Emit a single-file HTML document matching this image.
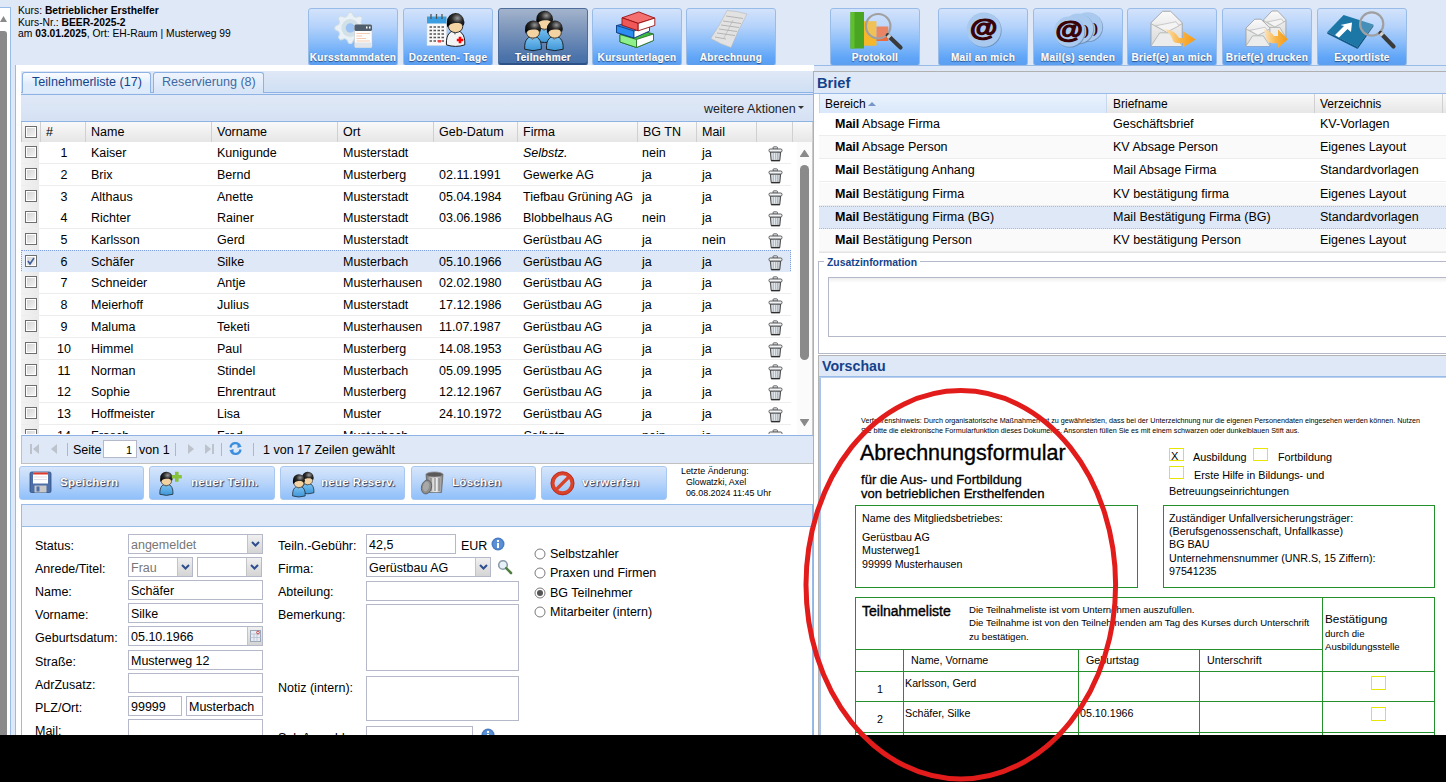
<!DOCTYPE html><html><head><meta charset="utf-8"><style>
*{box-sizing:border-box;margin:0;padding:0}
html,body{width:1446px;height:782px;overflow:hidden;background:#dfe8f6;font-family:"Liberation Sans",sans-serif;color:#000}
.a{position:absolute}
.t{position:absolute;white-space:nowrap;line-height:1}
.tb{position:absolute;border:1px solid #99bbe8;border-radius:3px;background:linear-gradient(#d3e3fb 0%,#b6d3fb 30%,#86bbf9 62%,#5ea4f7 88%,#5c9ff0 100%);overflow:hidden}
.tb.act{background:linear-gradient(#a3b3cc 0%,#7a94ba 40%,#4c74ab 85%,#4670aa 100%);border-color:#4d6d9c;box-shadow:inset 0 -2px 0 #2e5288}
.tb .lbl{position:absolute;left:0;right:0;bottom:1px;text-align:center;color:#fff;font-weight:bold;font-size:10px;line-height:12px;-webkit-text-stroke:0.2px #fff;text-shadow:0 1px 1px rgba(0,20,60,0.55),0 0 1px rgba(0,20,60,0.45);white-space:nowrap;letter-spacing:0.35px}

.gh{position:absolute;top:0;height:20px;font-size:12.5px;line-height:21px;padding-left:5px;border-right:1px solid #d0d0d0;white-space:nowrap}
.cell{position:absolute;font-size:12.5px;line-height:23px;white-space:nowrap}
.cb{position:absolute;width:12px;height:12px;border:1px solid #6e6e6e;background:linear-gradient(135deg,#d0d0d0,#f6f6f6);box-shadow:inset 0 0 0 1px #fff}
.inp{position:absolute;border:1px solid #b5b8c8;background:#fff;font-size:12.5px;line-height:18px;padding-left:2px;padding-top:1px;white-space:nowrap;overflow:hidden}
.trig{position:absolute;right:0;top:0;bottom:0;width:15px;background:linear-gradient(#f0f0f0,#d4d4d4);border-left:1px solid #c4c4c4}
.lab{position:absolute;font-size:12.5px;line-height:14px;white-space:nowrap}
.btn2{position:absolute;top:466px;height:34px;border:1px solid #a9c8f0;border-radius:3px;background:linear-gradient(#d7e6fb,#b7d4fa 50%,#8fc0fb 100%)}
.btn2 .l{position:absolute;top:8px;font-weight:bold;font-size:11.6px;letter-spacing:0.25px;color:#fff;text-shadow:1px 1px 1px rgba(0,0,30,0.7),0 0 1px rgba(0,0,40,0.6);white-space:nowrap}
</style></head><body><svg width="0" height="0" style="position:absolute"><defs>
<radialGradient id="hair" cx="0.6" cy="0.35" r="0.7"><stop offset="0" stop-color="#9a9a9a"/><stop offset="0.45" stop-color="#2a2a2a"/><stop offset="1" stop-color="#000"/></radialGradient>
<linearGradient id="bodyb" x1="0" y1="0" x2="0" y2="1"><stop offset="0" stop-color="#7cc4f4"/><stop offset="1" stop-color="#3e95d6"/></linearGradient>
<linearGradient id="env" x1="0" y1="0" x2="0" y2="1"><stop offset="0" stop-color="#fafafa"/><stop offset="1" stop-color="#d8d8d8"/></linearGradient>
<linearGradient id="arr" x1="0" y1="0" x2="1" y2="0"><stop offset="0" stop-color="#fde6c0"/><stop offset="0.5" stop-color="#f8b548"/><stop offset="1" stop-color="#f59a12"/></linearGradient>
<linearGradient id="can" x1="0" y1="0" x2="1" y2="0"><stop offset="0" stop-color="#6d6d6d"/><stop offset="0.35" stop-color="#cfcfcf"/><stop offset="0.6" stop-color="#f0f0f0"/><stop offset="1" stop-color="#7a7a7a"/></linearGradient>
<linearGradient id="trg" x1="0" y1="0" x2="1" y2="0"><stop offset="0" stop-color="#b9c3cd"/><stop offset="0.45" stop-color="#f4f6f8"/><stop offset="1" stop-color="#aab4be"/></linearGradient></defs></svg><div class="a" style="left:0;top:7px;width:11px;height:728px;background:#fff;border-top:1px solid #99bbe8;border-right:1px solid #99bbe8"></div><svg class="a" style="left:0;top:14px" width="8" height="10"><path d="M0 8 L3.5 2 L7 8 Z" fill="#8a8a8a"/></svg><div class="a" style="left:0;top:31px;width:7px;height:704px;background:#8a8a8a;border-radius:0 3px 0 0"></div><div class="a" style="left:11px;top:65px;width:4px;height:670px;background:#dfe8f6"></div><div class="t" style="left:18px;top:5.65px;font-size:10.3px;line-height:10.3px">Kurs: <b>Betrieblicher Ersthelfer</b></div><div class="t" style="left:18px;top:17.65px;font-size:10.3px;line-height:10.3px">Kurs-Nr.: <b>BEER-2025-2</b></div><div class="t" style="left:18px;top:28.65px;font-size:10.3px;line-height:10.3px">am <b>03.01.2025</b>, Ort: EH-Raum | Musterweg 99</div><div class="tb" style="left:308px;top:8px;width:90px;height:58px"><svg style="position:absolute;left:-1px;top:-1px" width="91" height="50" overflow="visible"><polygon points="40.78,4.57 43.82,4.57 45.81,8.43 48.00,9.34 52.13,8.02 54.28,10.17 52.96,14.30 53.87,16.49 57.73,18.48 57.73,21.52 53.87,23.51 52.96,25.70 54.28,29.83 52.13,31.98 48.00,30.66 45.81,31.57 43.82,35.43 40.78,35.43 38.79,31.57 36.60,30.66 32.47,31.98 30.32,29.83 31.64,25.70 30.73,23.51 26.87,21.52 26.87,18.48 30.73,16.49 31.64,14.30 30.32,10.17 32.47,8.02 36.60,9.34 38.79,8.43" fill="#e9f1f6" stroke="#cfdde6" stroke-width="1" stroke-linejoin="round"/><circle cx="42.3" cy="20" r="9" fill="#d2e0e8"/><circle cx="42.3" cy="20" r="4.7" fill="#9cc3f4"/><rect x="46.5" y="16.5" width="17.5" height="23" rx="1.5" fill="#fdfdfd" stroke="#c0c8d0" stroke-width="0.6"/><rect x="46.5" y="16.5" width="17.5" height="6.5" rx="1.5" fill="#4f5e6e"/><rect x="58" y="18.5" width="1.5" height="2" fill="#fff"/><rect x="61" y="18.5" width="1.5" height="2" fill="#fff"/><rect x="47" y="34.5" width="16.5" height="5" fill="#dfe5ea"/><path d="M48.5 25.5H62M48.5 28H54M48.5 30.5H58M48.5 33H62" stroke="#f2b890" stroke-width="0.7"/></svg><div class="lbl">Kursstammdaten</div></div><div class="tb" style="left:403px;top:8px;width:90px;height:58px"><svg style="position:absolute;left:-1px;top:-1px" width="91" height="50" overflow="visible"><rect x="24" y="8.5" width="19.5" height="29" fill="#f8f8f8" stroke="#d8d8d8" stroke-width="0.5"/><rect x="24" y="8.5" width="19.5" height="7" fill="#3b9ee0"/><path d="M28 6V11M33.5 6V11M39 6V11" stroke="#555" stroke-width="1.3"/><path d="M26.5 19H29M30.5 19H33M34.5 19H37M38.5 19H41" stroke="#555" stroke-width="1.4" stroke-dasharray="none"/><path d="M26.5 22.5H29M30.5 22.5H33M34.5 22.5H37M38.5 22.5H41" stroke="#555" stroke-width="1.4" stroke-dasharray="none"/><path d="M26.5 26H29M30.5 26H33M34.5 26H37M38.5 26H41" stroke="#555" stroke-width="1.4" stroke-dasharray="none"/><path d="M26.5 29.5H29M30.5 29.5H33M34.5 29.5H37M38.5 29.5H41" stroke="#555" stroke-width="1.4" stroke-dasharray="none"/><path d="M26.5 33H29M30.5 33H33M34.5 33H37M38.5 33H41" stroke="#555" stroke-width="1.4" stroke-dasharray="none"/><rect x="35" y="32" width="3" height="2.5" fill="#e84848"/><path d="M43.42 36.83 C42.77 25.01 48.47 22.64 52.60 22.64 C56.73 22.64 62.43 25.01 61.78 36.83 Q52.60 39.98 43.42 36.83Z" fill="#f4f4f4" stroke="#151515" stroke-width="0.97"/><path d="M50.01 22.96 L51.95 26.31 L54.11 22.96Z" fill="#fff" stroke="#333" stroke-width="0.54"/><ellipse cx="52.60" cy="18.64" rx="7.13" ry="5.94" fill="#f3d3a2" stroke="#1a1a1a" stroke-width="0.86"/><path d="M44.61 19.62 C45.58 16.70 48.28 15.62 50.44 15.30 C53.68 14.86 58.00 14.54 60.48 17.78 C61.78 15.08 61.46 12.92 61.24 13.46 A8.64 8.64 0 0 0 43.96 14.00 C43.64 16.16 43.96 18.32 44.61 19.62Z" fill="url(#hair)"/><path d="M53.8 32H60.2M57 28.8V35.2" stroke="#f00" stroke-width="2.6"/></svg><div class="lbl">Dozenten- Tage</div></div><div class="tb act" style="left:498px;top:8px;width:90px;height:58px"><svg style="position:absolute;left:-1px;top:-1px" width="91" height="50" overflow="visible"><path d="M37.84 32.97 C37.23 21.70 42.66 19.44 46.60 19.44 C50.54 19.44 55.97 21.70 55.36 32.97 Q46.60 35.98 37.84 32.97Z" fill="url(#bodyb)" stroke="#151515" stroke-width="0.93"/><path d="M44.13 19.75 L45.98 22.94 L48.04 19.75Z" fill="#fff" stroke="#333" stroke-width="0.52"/><ellipse cx="46.60" cy="15.63" rx="6.80" ry="5.67" fill="#f3d3a2" stroke="#1a1a1a" stroke-width="0.82"/><path d="M38.98 16.56 C39.91 13.77 42.48 12.74 44.54 12.44 C47.63 12.02 51.75 11.71 54.12 14.80 C55.36 12.23 55.05 10.17 54.84 10.68 A8.24 8.24 0 0 0 38.36 11.20 C38.05 13.26 38.36 15.32 38.98 16.56Z" fill="url(#hair)"/><path d="M26.67 41.22 C26.08 30.49 31.25 28.34 35.00 28.34 C38.75 28.34 43.92 30.49 43.33 41.22 Q35.00 44.08 26.67 41.22Z" fill="url(#bodyb)" stroke="#151515" stroke-width="0.88"/><path d="M32.65 28.63 L34.41 31.67 L36.37 28.63Z" fill="#fff" stroke="#333" stroke-width="0.49"/><ellipse cx="35.00" cy="24.71" rx="6.47" ry="5.39" fill="#f3d3a2" stroke="#1a1a1a" stroke-width="0.78"/><path d="M27.75 25.60 C28.63 22.95 31.08 21.97 33.04 21.68 C35.98 21.28 39.90 20.99 42.15 23.93 C43.33 21.48 43.04 19.52 42.84 20.01 A7.84 7.84 0 0 0 27.16 20.50 C26.87 22.46 27.16 24.42 27.75 25.60Z" fill="url(#hair)"/><path d="M48.47 41.22 C47.88 30.49 53.05 28.34 56.80 28.34 C60.55 28.34 65.72 30.49 65.13 41.22 Q56.80 44.08 48.47 41.22Z" fill="url(#bodyb)" stroke="#151515" stroke-width="0.88"/><path d="M54.45 28.63 L56.21 31.67 L58.17 28.63Z" fill="#fff" stroke="#333" stroke-width="0.49"/><ellipse cx="56.80" cy="24.71" rx="6.47" ry="5.39" fill="#f3d3a2" stroke="#1a1a1a" stroke-width="0.78"/><path d="M49.55 25.60 C50.43 22.95 52.88 21.97 54.84 21.68 C57.78 21.28 61.70 20.99 63.95 23.93 C65.13 21.48 64.84 19.52 64.64 20.01 A7.84 7.84 0 0 0 48.96 20.50 C48.67 22.46 48.96 24.42 49.55 25.60Z" fill="url(#hair)"/></svg><div class="lbl">Teilnehmer</div></div><div class="tb" style="left:592px;top:8px;width:90px;height:58px"><svg style="position:absolute;left:-1px;top:-1px" width="91" height="50" overflow="visible"><path d="M28 26.5 L47 22 L61.5 26 L61.5 32.5 L44.5 39.5 L28 34Z" fill="#3fb83f" stroke="#1d5e1d" stroke-width="0.8"/><path d="M28 26.5 L44.5 31.5 L44.5 39.5 L28 34Z" fill="#8ef08a" stroke="#1d6e1d" stroke-width="0.8"/><path d="M44.5 31.5 L61.5 26 L61.5 32.5 L44.5 39.5Z" fill="#fff" stroke="#1d6e1d" stroke-width="0.8"/><path d="M24.5 17.5 L43 13 L57.5 17 L57.5 23 L42 30 L24.5 24.5Z" fill="#2a7fe0" stroke="#113a7a" stroke-width="0.8"/><path d="M24.5 17.5 L42 23 L42 30 L24.5 24.5Z" fill="#2d8df0" stroke="#113a7a" stroke-width="0.8"/><path d="M42 23 L57.5 17 L57.5 23 L42 30Z" fill="#fff" stroke="#113a7a" stroke-width="0.8"/><path d="M30 9.8 L46.8 3.9 L62.8 10.1 L46.2 15.4Z" fill="#f47070" stroke="#9a1010" stroke-width="0.9"/><path d="M30 9.8 L46.2 15.4 L46.2 22.8 L30 17.2Z" fill="#f05858" stroke="#9a1010" stroke-width="0.9"/><path d="M46.2 15.4 L62.8 10.1 L62.8 17.4 L46.2 22.8Z" fill="#fff" stroke="#9a1010" stroke-width="0.9"/></svg><div class="lbl">Kursunterlagen</div></div><div class="tb" style="left:686px;top:8px;width:90px;height:58px"><svg style="position:absolute;left:-1px;top:-1px" width="91" height="50" overflow="visible"><path d="M41 2.5 Q51 3 61 6 Q52 22 45 39.5 Q34 36 24.8 30.5 Q34 17 41 2.5Z" fill="#e2e2e2" stroke="#b8b8b8" stroke-width="0.6"/><path d="M40 8 L57 10.5 M37 13 L55 15.5 M35 17 L53 19.5 M33 21 L51 23.5 M31 25 L49 27.5 M29 29 L40 31" stroke="#a8a8a8" stroke-width="0.8"/><path d="M47 12 L38 30" stroke="#b0b0b0" stroke-width="0.6"/></svg><div class="lbl">Abrechnung</div></div><div class="tb" style="left:830px;top:8px;width:90px;height:58px"><svg style="position:absolute;left:-1px;top:-1px" width="91" height="50" overflow="visible"><rect x="20.5" y="4" width="13.5" height="36.5" fill="#4aa523"/><rect x="20.5" y="4" width="4" height="36.5" fill="#5fbf2e"/><rect x="34" y="13.2" width="12.5" height="24.5" fill="#f6b72a"/><rect x="46.5" y="18.5" width="11.8" height="14.5" fill="#ee6a3a"/><circle cx="48.2" cy="18.2" r="12.2" fill="#dceafc" fill-opacity="0.22" stroke="#a0a0a0" stroke-width="2.2"/><path d="M57.7 27.3 L70.5 39.5" stroke="#3a3a3a" stroke-width="4.2" stroke-linecap="round"/><path d="M57.7 27.3 L59.9 29.4" stroke="#cfcfcf" stroke-width="4.2"/></svg><div class="lbl">Protokoll</div></div><div class="tb" style="left:938px;top:8px;width:90px;height:58px"><svg style="position:absolute;left:-1px;top:-1px" width="91" height="50" overflow="visible"><circle cx="46.5" cy="22.400000000000002" r="17.2" fill="#5d7a9e" opacity="0.6"/><circle cx="45.7" cy="21.6" r="17.2" fill="#a9caee"/><g transform="translate(45.7,20.6) scale(1.12,0.92)"><text x="0" y="8" text-anchor="middle" font-family="Liberation Sans" font-weight="bold" font-size="25" fill="#3a0306" stroke="#3a0306" stroke-width="1.3">@</text></g></svg><div class="lbl">Mail an mich</div></div><div class="tb" style="left:1033px;top:8px;width:90px;height:58px"><svg style="position:absolute;left:-1px;top:-1px" width="91" height="50" overflow="visible"><circle cx="55.599999999999994" cy="19.6" r="14.5" fill="#5d7a9e" opacity="0.6"/><circle cx="54.8" cy="18.8" r="14.5" fill="#a9caee"/><text x="60" y="25" font-family="Liberation Serif" font-weight="bold" font-size="15" fill="#3a0306">)</text><circle cx="46.0" cy="21.3" r="15" fill="#5d7a9e" opacity="0.6"/><circle cx="45.2" cy="20.5" r="15" fill="#a9caee"/><text x="51" y="27" font-family="Liberation Serif" font-weight="bold" font-size="15" fill="#3a0306">)</text><circle cx="37.0" cy="24.400000000000002" r="15.2" fill="#5d7a9e" opacity="0.6"/><circle cx="36.2" cy="23.6" r="15.2" fill="#a9caee"/><g transform="translate(36.2,22.6) scale(1.12,0.92)"><text x="0" y="8" text-anchor="middle" font-family="Liberation Sans" font-weight="bold" font-size="25" fill="#3a0306" stroke="#3a0306" stroke-width="1.3">@</text></g></svg><div class="lbl">Mail(s) senden</div></div><div class="tb" style="left:1127px;top:8px;width:90px;height:58px"><svg style="position:absolute;left:-1px;top:-1px" width="91" height="50" overflow="visible"><path d="M24 14.751000000000001 L35.544 3.3 L43.656 3.3 L55.2 14.751000000000001 L55.2 38.0 L24 38.0Z" fill="url(#env)" stroke="#9a9a9a" stroke-width="0.8"/><path d="M24 15.751000000000001 L39.6 24.12 L55.2 15.751000000000001" fill="#e6e6e6" stroke="#a8b0a8" stroke-width="0.8"/><path d="M28.68 17.874 L48.96 13.71 L52.08 17.874 L39.6 24.12Z" fill="#f4f4f4" stroke="#b0b0b0" stroke-width="0.6"/><path d="M24 38.0 L32.736000000000004 24.814000000000004 L46.464 24.814000000000004 L55.2 38.0" fill="#ececec" stroke="#a8b0a8" stroke-width="0.8"/><path d="M37 21 Q48 22 52 30 L56 30 L56 23.3 L68.7 31.5 L56 39.6 L56 35 Q48 36 46 33 Q45 27 37 21Z" fill="url(#arr)"/></svg><div class="lbl">Brief(e) an mich</div></div><div class="tb" style="left:1222px;top:8px;width:90px;height:58px"><svg style="position:absolute;left:-1px;top:-1px" width="91" height="50" overflow="visible"><path d="M41.7 11.745000000000001 L49.914 3 L55.686 3 L63.900000000000006 11.745000000000001 L63.900000000000006 29.5 L41.7 29.5Z" fill="url(#env)" stroke="#9a9a9a" stroke-width="0.8"/><path d="M41.7 12.745000000000001 L52.800000000000004 18.9 L63.900000000000006 12.745000000000001" fill="#e6e6e6" stroke="#a8b0a8" stroke-width="0.8"/><path d="M45.03 14.129999999999999 L59.46000000000001 10.95 L61.68000000000001 14.129999999999999 L52.800000000000004 18.9Z" fill="#f4f4f4" stroke="#b0b0b0" stroke-width="0.6"/><path d="M41.7 29.5 L47.916000000000004 19.43 L57.684 19.43 L63.900000000000006 29.5" fill="#ececec" stroke="#a8b0a8" stroke-width="0.8"/><path d="M24 20.044 L32.843 11.2 L39.057 11.2 L47.9 20.044 L47.9 38.0 L24 38.0Z" fill="url(#env)" stroke="#9a9a9a" stroke-width="0.8"/><path d="M24 21.044 L35.95 27.279999999999998 L47.9 21.044" fill="#e6e6e6" stroke="#a8b0a8" stroke-width="0.8"/><path d="M27.585 22.456 L43.120000000000005 19.24 L45.51 22.456 L35.95 27.279999999999998Z" fill="#f4f4f4" stroke="#b0b0b0" stroke-width="0.6"/><path d="M24 38.0 L30.692 27.816 L41.208 27.816 L47.9 38.0" fill="#ececec" stroke="#a8b0a8" stroke-width="0.8"/><path d="M42 21 Q50 24 52 28 L56 28 L56 21.6 L65.9 31.2 L56 39.9 L56 35 Q48 36 45 33 Q43 27 42 21Z" fill="url(#arr)"/></svg><div class="lbl">Brief(e) drucken</div></div><div class="tb" style="left:1317px;top:8px;width:90px;height:58px"><svg style="position:absolute;left:-1px;top:-1px" width="91" height="50" overflow="visible"><path d="M10.3 23.9 L26.6 7 L56.4 16.6 L40.6 39.1Z" fill="#1c77a6"/><path d="M10.3 23.9 L40.6 39.1 L40.6 41 L10.3 25.8Z" fill="#0f5a82"/><path d="M40.6 39.1 L56.4 16.6 L56.4 18.5 L40.6 41Z" fill="#0b4a6e"/><path d="M18 27 L27 18 L23.5 17 L35 14.5 L34 24 L30.5 21 L22 29.5Z" fill="#fff"/><circle cx="54.7" cy="16" r="11.6" fill="#dceafc" fill-opacity="0.22" stroke="#a0a0a0" stroke-width="2.2"/><path d="M63.5 25.0 L76.5 38.5" stroke="#3a3a3a" stroke-width="4.2" stroke-linecap="round"/><path d="M63.5 25.0 L65.6 27.2" stroke="#cfcfcf" stroke-width="4.2"/></svg><div class="lbl">Exportliste</div></div><div class="a" style="left:15px;top:65px;width:1431px;height:1px;background:#99bbe8"></div><div class="a" style="left:15px;top:65px;width:799px;height:670px;background:#fff;border-left:1px solid #99bbe8"></div><div class="a" style="left:21px;top:71px;width:792px;height:22px;background:linear-gradient(#dfe8f6,#cfdff4)"></div><div class="a" style="left:21px;top:92px;width:792px;height:1px;background:#8db2e3"></div><div class="a" style="left:21px;top:93px;width:792px;height:1px;background:#dbe7f8"></div><div class="a" style="left:21px;top:94px;width:792px;height:1px;background:#8db2e3"></div><div class="a" style="left:22px;top:72px;width:129px;height:21px;border:1px solid #8db2e3;border-bottom:none;border-radius:3px 3px 0 0;background:linear-gradient(#fafcff,#deebfb 60%,#deebfb)"></div><div class="t" style="left:32px;top:75px;font-size:12.6px;line-height:14px;color:#15428b">Teilnehmerliste (17)</div><div class="a" style="left:153px;top:72px;width:111px;height:21px;border:1px solid #8db2e3;border-bottom:none;border-radius:3px 3px 0 0;background:linear-gradient(#eef4fd,#d6e4f8)"></div><div class="t" style="left:162px;top:75px;font-size:12.6px;line-height:14px;color:#416aa3">Reservierung (8)</div><div class="a" style="left:21px;top:95px;width:792px;height:27px;background:linear-gradient(#dfe8f6,#d5e2f4)"></div><div class="a" style="left:21px;top:121px;width:792px;height:1px;background:#8db2e3"></div><div class="t" style="left:704px;top:102px;font-size:12.5px;line-height:14px;color:#222">weitere Aktionen</div><svg class="a" style="left:798px;top:106px" width="6" height="4"><path d="M0 0H6L3 3Z" fill="#333"/></svg><div class="a" style="left:21px;top:122px;width:792px;height:20px;background:linear-gradient(#f9f9f9,#e6e6e6);border-left:1px solid #c8c8c8"></div><div class="gh" style="top:122px;left:21px;width:20px"></div><div class="gh" style="top:122px;left:41px;width:45px">#</div><div class="gh" style="top:122px;left:86px;width:126px">Name</div><div class="gh" style="top:122px;left:212px;width:126px">Vorname</div><div class="gh" style="top:122px;left:338px;width:96px">Ort</div><div class="gh" style="top:122px;left:434px;width:84px">Geb-Datum</div><div class="gh" style="top:122px;left:518px;width:120px">Firma</div><div class="gh" style="top:122px;left:638px;width:59px">BG TN</div><div class="gh" style="top:122px;left:697px;width:60px">Mail</div><div class="gh" style="top:122px;left:757px;width:36px"></div><div class="gh" style="top:122px;left:793px;width:20px"></div><div class="cb" style="left:25px;top:126px"></div><div class="a" style="left:21px;top:142px;width:772px;height:292px;overflow:hidden"><div class="a" style="left:0;top:0px;width:770px;height:22px;background:#fff;border-bottom:1px solid #ededed"></div><div class="a" style="left:0;top:0px;width:18px;height:21px;background:linear-gradient(90deg,#f3f3f3,#e9e9e9)"></div><div class="cb" style="left:4px;top:4px"></div><div class="cell" style="left:23px;top:0px;width:40px;text-align:center">1</div><div class="cell" style="left:70px;top:0px;">Kaiser</div><div class="cell" style="left:196px;top:0px;">Kunigunde</div><div class="cell" style="left:322px;top:0px;">Musterstadt</div><div class="cell" style="left:418px;top:0px;"></div><div class="cell" style="left:502px;top:0px;font-style:italic;">Selbstz.</div><div class="cell" style="left:621px;top:0px;">nein</div><div class="cell" style="left:681px;top:0px;">ja</div><svg class="a" style="left:747px;top:4px" width="15" height="16" viewBox="0 0 15 16"><rect x="5" y="0.8" width="4.5" height="2.4" rx="1" fill="#e6eaee" stroke="#4a4a4a" stroke-width="0.8"/><path d="M2.3 6 L3.2 14.6 H11.8 L12.7 6Z" fill="url(#trg)" stroke="#3f3f3f" stroke-width="0.9"/><path d="M5.6 7V13.5M7.5 7V13.5M9.4 7V13.5" stroke="#a0acb8" stroke-width="0.8"/><rect x="1" y="3" width="13" height="3" rx="1.3" fill="#f2f4f6" stroke="#4a4a4a" stroke-width="0.9"/><path d="M3.2 14.6 H11.8" stroke="#2e2e2e" stroke-width="1.4"/></svg><div class="a" style="left:0;top:22px;width:770px;height:22px;background:#fff;border-bottom:1px solid #ededed"></div><div class="a" style="left:0;top:22px;width:18px;height:21px;background:linear-gradient(90deg,#f3f3f3,#e9e9e9)"></div><div class="cb" style="left:4px;top:26px"></div><div class="cell" style="left:23px;top:22px;width:40px;text-align:center">2</div><div class="cell" style="left:70px;top:22px;">Brix</div><div class="cell" style="left:196px;top:22px;">Bernd</div><div class="cell" style="left:322px;top:22px;">Musterberg</div><div class="cell" style="left:418px;top:22px;">02.11.1991</div><div class="cell" style="left:502px;top:22px;">Gewerke AG</div><div class="cell" style="left:621px;top:22px;">ja</div><div class="cell" style="left:681px;top:22px;">ja</div><svg class="a" style="left:747px;top:26px" width="15" height="16" viewBox="0 0 15 16"><rect x="5" y="0.8" width="4.5" height="2.4" rx="1" fill="#e6eaee" stroke="#4a4a4a" stroke-width="0.8"/><path d="M2.3 6 L3.2 14.6 H11.8 L12.7 6Z" fill="url(#trg)" stroke="#3f3f3f" stroke-width="0.9"/><path d="M5.6 7V13.5M7.5 7V13.5M9.4 7V13.5" stroke="#a0acb8" stroke-width="0.8"/><rect x="1" y="3" width="13" height="3" rx="1.3" fill="#f2f4f6" stroke="#4a4a4a" stroke-width="0.9"/><path d="M3.2 14.6 H11.8" stroke="#2e2e2e" stroke-width="1.4"/></svg><div class="a" style="left:0;top:44px;width:770px;height:22px;background:#fff;border-bottom:1px solid #ededed"></div><div class="a" style="left:0;top:44px;width:18px;height:21px;background:linear-gradient(90deg,#f3f3f3,#e9e9e9)"></div><div class="cb" style="left:4px;top:48px"></div><div class="cell" style="left:23px;top:44px;width:40px;text-align:center">3</div><div class="cell" style="left:70px;top:44px;">Althaus</div><div class="cell" style="left:196px;top:44px;">Anette</div><div class="cell" style="left:322px;top:44px;">Musterstadt</div><div class="cell" style="left:418px;top:44px;">05.04.1984</div><div class="cell" style="left:502px;top:44px;">Tiefbau Grüning AG</div><div class="cell" style="left:621px;top:44px;">ja</div><div class="cell" style="left:681px;top:44px;">ja</div><svg class="a" style="left:747px;top:48px" width="15" height="16" viewBox="0 0 15 16"><rect x="5" y="0.8" width="4.5" height="2.4" rx="1" fill="#e6eaee" stroke="#4a4a4a" stroke-width="0.8"/><path d="M2.3 6 L3.2 14.6 H11.8 L12.7 6Z" fill="url(#trg)" stroke="#3f3f3f" stroke-width="0.9"/><path d="M5.6 7V13.5M7.5 7V13.5M9.4 7V13.5" stroke="#a0acb8" stroke-width="0.8"/><rect x="1" y="3" width="13" height="3" rx="1.3" fill="#f2f4f6" stroke="#4a4a4a" stroke-width="0.9"/><path d="M3.2 14.6 H11.8" stroke="#2e2e2e" stroke-width="1.4"/></svg><div class="a" style="left:0;top:65px;width:770px;height:22px;background:#fff;border-bottom:1px solid #ededed"></div><div class="a" style="left:0;top:65px;width:18px;height:21px;background:linear-gradient(90deg,#f3f3f3,#e9e9e9)"></div><div class="cb" style="left:4px;top:69px"></div><div class="cell" style="left:23px;top:65px;width:40px;text-align:center">4</div><div class="cell" style="left:70px;top:65px;">Richter</div><div class="cell" style="left:196px;top:65px;">Rainer</div><div class="cell" style="left:322px;top:65px;">Musterstadt</div><div class="cell" style="left:418px;top:65px;">03.06.1986</div><div class="cell" style="left:502px;top:65px;">Blobbelhaus AG</div><div class="cell" style="left:621px;top:65px;">nein</div><div class="cell" style="left:681px;top:65px;">ja</div><svg class="a" style="left:747px;top:69px" width="15" height="16" viewBox="0 0 15 16"><rect x="5" y="0.8" width="4.5" height="2.4" rx="1" fill="#e6eaee" stroke="#4a4a4a" stroke-width="0.8"/><path d="M2.3 6 L3.2 14.6 H11.8 L12.7 6Z" fill="url(#trg)" stroke="#3f3f3f" stroke-width="0.9"/><path d="M5.6 7V13.5M7.5 7V13.5M9.4 7V13.5" stroke="#a0acb8" stroke-width="0.8"/><rect x="1" y="3" width="13" height="3" rx="1.3" fill="#f2f4f6" stroke="#4a4a4a" stroke-width="0.9"/><path d="M3.2 14.6 H11.8" stroke="#2e2e2e" stroke-width="1.4"/></svg><div class="a" style="left:0;top:87px;width:770px;height:22px;background:#fff;border-bottom:1px solid #ededed"></div><div class="a" style="left:0;top:87px;width:18px;height:21px;background:linear-gradient(90deg,#f3f3f3,#e9e9e9)"></div><div class="cb" style="left:4px;top:91px"></div><div class="cell" style="left:23px;top:87px;width:40px;text-align:center">5</div><div class="cell" style="left:70px;top:87px;">Karlsson</div><div class="cell" style="left:196px;top:87px;">Gerd</div><div class="cell" style="left:322px;top:87px;">Musterstadt</div><div class="cell" style="left:418px;top:87px;"></div><div class="cell" style="left:502px;top:87px;">Gerüstbau AG</div><div class="cell" style="left:621px;top:87px;">ja</div><div class="cell" style="left:681px;top:87px;">nein</div><svg class="a" style="left:747px;top:91px" width="15" height="16" viewBox="0 0 15 16"><rect x="5" y="0.8" width="4.5" height="2.4" rx="1" fill="#e6eaee" stroke="#4a4a4a" stroke-width="0.8"/><path d="M2.3 6 L3.2 14.6 H11.8 L12.7 6Z" fill="url(#trg)" stroke="#3f3f3f" stroke-width="0.9"/><path d="M5.6 7V13.5M7.5 7V13.5M9.4 7V13.5" stroke="#a0acb8" stroke-width="0.8"/><rect x="1" y="3" width="13" height="3" rx="1.3" fill="#f2f4f6" stroke="#4a4a4a" stroke-width="0.9"/><path d="M3.2 14.6 H11.8" stroke="#2e2e2e" stroke-width="1.4"/></svg><div class="a" style="left:0;top:108px;width:770px;height:23px;background:#dfe8f6;border:1px dotted #7f9fe0"></div><div class="a" style="left:1px;top:109px;width:18px;height:21px;background:linear-gradient(90deg,#e8f0fb,#d6e5f8)"></div><div class="cb" style="left:4px;top:113px"></div><svg class="a" style="left:5px;top:114px" width="10" height="10"><path d="M2 5 L4 8 L8 2" stroke="#3d5f9e" stroke-width="1.6" fill="none"/></svg><div class="cell" style="left:23px;top:109px;width:40px;text-align:center">6</div><div class="cell" style="left:70px;top:109px;">Schäfer</div><div class="cell" style="left:196px;top:109px;">Silke</div><div class="cell" style="left:322px;top:109px;">Musterbach</div><div class="cell" style="left:418px;top:109px;">05.10.1966</div><div class="cell" style="left:502px;top:109px;">Gerüstbau AG</div><div class="cell" style="left:621px;top:109px;">ja</div><div class="cell" style="left:681px;top:109px;">ja</div><svg class="a" style="left:747px;top:113px" width="15" height="16" viewBox="0 0 15 16"><rect x="5" y="0.8" width="4.5" height="2.4" rx="1" fill="#e6eaee" stroke="#4a4a4a" stroke-width="0.8"/><path d="M2.3 6 L3.2 14.6 H11.8 L12.7 6Z" fill="url(#trg)" stroke="#3f3f3f" stroke-width="0.9"/><path d="M5.6 7V13.5M7.5 7V13.5M9.4 7V13.5" stroke="#a0acb8" stroke-width="0.8"/><rect x="1" y="3" width="13" height="3" rx="1.3" fill="#f2f4f6" stroke="#4a4a4a" stroke-width="0.9"/><path d="M3.2 14.6 H11.8" stroke="#2e2e2e" stroke-width="1.4"/></svg><div class="a" style="left:0;top:130px;width:770px;height:22px;background:#fff;border-bottom:1px solid #ededed"></div><div class="a" style="left:0;top:130px;width:18px;height:21px;background:linear-gradient(90deg,#f3f3f3,#e9e9e9)"></div><div class="cb" style="left:4px;top:134px"></div><div class="cell" style="left:23px;top:130px;width:40px;text-align:center">7</div><div class="cell" style="left:70px;top:130px;">Schneider</div><div class="cell" style="left:196px;top:130px;">Antje</div><div class="cell" style="left:322px;top:130px;">Musterhausen</div><div class="cell" style="left:418px;top:130px;">02.02.1980</div><div class="cell" style="left:502px;top:130px;">Gerüstbau AG</div><div class="cell" style="left:621px;top:130px;">ja</div><div class="cell" style="left:681px;top:130px;">ja</div><svg class="a" style="left:747px;top:134px" width="15" height="16" viewBox="0 0 15 16"><rect x="5" y="0.8" width="4.5" height="2.4" rx="1" fill="#e6eaee" stroke="#4a4a4a" stroke-width="0.8"/><path d="M2.3 6 L3.2 14.6 H11.8 L12.7 6Z" fill="url(#trg)" stroke="#3f3f3f" stroke-width="0.9"/><path d="M5.6 7V13.5M7.5 7V13.5M9.4 7V13.5" stroke="#a0acb8" stroke-width="0.8"/><rect x="1" y="3" width="13" height="3" rx="1.3" fill="#f2f4f6" stroke="#4a4a4a" stroke-width="0.9"/><path d="M3.2 14.6 H11.8" stroke="#2e2e2e" stroke-width="1.4"/></svg><div class="a" style="left:0;top:152px;width:770px;height:22px;background:#fff;border-bottom:1px solid #ededed"></div><div class="a" style="left:0;top:152px;width:18px;height:21px;background:linear-gradient(90deg,#f3f3f3,#e9e9e9)"></div><div class="cb" style="left:4px;top:156px"></div><div class="cell" style="left:23px;top:152px;width:40px;text-align:center">8</div><div class="cell" style="left:70px;top:152px;">Meierhoff</div><div class="cell" style="left:196px;top:152px;">Julius</div><div class="cell" style="left:322px;top:152px;">Musterstadt</div><div class="cell" style="left:418px;top:152px;">17.12.1986</div><div class="cell" style="left:502px;top:152px;">Gerüstbau AG</div><div class="cell" style="left:621px;top:152px;">ja</div><div class="cell" style="left:681px;top:152px;">ja</div><svg class="a" style="left:747px;top:156px" width="15" height="16" viewBox="0 0 15 16"><rect x="5" y="0.8" width="4.5" height="2.4" rx="1" fill="#e6eaee" stroke="#4a4a4a" stroke-width="0.8"/><path d="M2.3 6 L3.2 14.6 H11.8 L12.7 6Z" fill="url(#trg)" stroke="#3f3f3f" stroke-width="0.9"/><path d="M5.6 7V13.5M7.5 7V13.5M9.4 7V13.5" stroke="#a0acb8" stroke-width="0.8"/><rect x="1" y="3" width="13" height="3" rx="1.3" fill="#f2f4f6" stroke="#4a4a4a" stroke-width="0.9"/><path d="M3.2 14.6 H11.8" stroke="#2e2e2e" stroke-width="1.4"/></svg><div class="a" style="left:0;top:174px;width:770px;height:22px;background:#fff;border-bottom:1px solid #ededed"></div><div class="a" style="left:0;top:174px;width:18px;height:21px;background:linear-gradient(90deg,#f3f3f3,#e9e9e9)"></div><div class="cb" style="left:4px;top:178px"></div><div class="cell" style="left:23px;top:174px;width:40px;text-align:center">9</div><div class="cell" style="left:70px;top:174px;">Maluma</div><div class="cell" style="left:196px;top:174px;">Teketi</div><div class="cell" style="left:322px;top:174px;">Musterhausen</div><div class="cell" style="left:418px;top:174px;">11.07.1987</div><div class="cell" style="left:502px;top:174px;">Gerüstbau AG</div><div class="cell" style="left:621px;top:174px;">ja</div><div class="cell" style="left:681px;top:174px;">ja</div><svg class="a" style="left:747px;top:178px" width="15" height="16" viewBox="0 0 15 16"><rect x="5" y="0.8" width="4.5" height="2.4" rx="1" fill="#e6eaee" stroke="#4a4a4a" stroke-width="0.8"/><path d="M2.3 6 L3.2 14.6 H11.8 L12.7 6Z" fill="url(#trg)" stroke="#3f3f3f" stroke-width="0.9"/><path d="M5.6 7V13.5M7.5 7V13.5M9.4 7V13.5" stroke="#a0acb8" stroke-width="0.8"/><rect x="1" y="3" width="13" height="3" rx="1.3" fill="#f2f4f6" stroke="#4a4a4a" stroke-width="0.9"/><path d="M3.2 14.6 H11.8" stroke="#2e2e2e" stroke-width="1.4"/></svg><div class="a" style="left:0;top:196px;width:770px;height:22px;background:#fff;border-bottom:1px solid #ededed"></div><div class="a" style="left:0;top:196px;width:18px;height:21px;background:linear-gradient(90deg,#f3f3f3,#e9e9e9)"></div><div class="cb" style="left:4px;top:200px"></div><div class="cell" style="left:23px;top:196px;width:40px;text-align:center">10</div><div class="cell" style="left:70px;top:196px;">Himmel</div><div class="cell" style="left:196px;top:196px;">Paul</div><div class="cell" style="left:322px;top:196px;">Musterberg</div><div class="cell" style="left:418px;top:196px;">14.08.1953</div><div class="cell" style="left:502px;top:196px;">Gerüstbau AG</div><div class="cell" style="left:621px;top:196px;">ja</div><div class="cell" style="left:681px;top:196px;">ja</div><svg class="a" style="left:747px;top:200px" width="15" height="16" viewBox="0 0 15 16"><rect x="5" y="0.8" width="4.5" height="2.4" rx="1" fill="#e6eaee" stroke="#4a4a4a" stroke-width="0.8"/><path d="M2.3 6 L3.2 14.6 H11.8 L12.7 6Z" fill="url(#trg)" stroke="#3f3f3f" stroke-width="0.9"/><path d="M5.6 7V13.5M7.5 7V13.5M9.4 7V13.5" stroke="#a0acb8" stroke-width="0.8"/><rect x="1" y="3" width="13" height="3" rx="1.3" fill="#f2f4f6" stroke="#4a4a4a" stroke-width="0.9"/><path d="M3.2 14.6 H11.8" stroke="#2e2e2e" stroke-width="1.4"/></svg><div class="a" style="left:0;top:218px;width:770px;height:22px;background:#fff;border-bottom:1px solid #ededed"></div><div class="a" style="left:0;top:218px;width:18px;height:21px;background:linear-gradient(90deg,#f3f3f3,#e9e9e9)"></div><div class="cb" style="left:4px;top:222px"></div><div class="cell" style="left:23px;top:218px;width:40px;text-align:center">11</div><div class="cell" style="left:70px;top:218px;">Norman</div><div class="cell" style="left:196px;top:218px;">Stindel</div><div class="cell" style="left:322px;top:218px;">Musterbach</div><div class="cell" style="left:418px;top:218px;">05.09.1995</div><div class="cell" style="left:502px;top:218px;">Gerüstbau AG</div><div class="cell" style="left:621px;top:218px;">ja</div><div class="cell" style="left:681px;top:218px;">ja</div><svg class="a" style="left:747px;top:222px" width="15" height="16" viewBox="0 0 15 16"><rect x="5" y="0.8" width="4.5" height="2.4" rx="1" fill="#e6eaee" stroke="#4a4a4a" stroke-width="0.8"/><path d="M2.3 6 L3.2 14.6 H11.8 L12.7 6Z" fill="url(#trg)" stroke="#3f3f3f" stroke-width="0.9"/><path d="M5.6 7V13.5M7.5 7V13.5M9.4 7V13.5" stroke="#a0acb8" stroke-width="0.8"/><rect x="1" y="3" width="13" height="3" rx="1.3" fill="#f2f4f6" stroke="#4a4a4a" stroke-width="0.9"/><path d="M3.2 14.6 H11.8" stroke="#2e2e2e" stroke-width="1.4"/></svg><div class="a" style="left:0;top:239px;width:770px;height:22px;background:#fff;border-bottom:1px solid #ededed"></div><div class="a" style="left:0;top:239px;width:18px;height:21px;background:linear-gradient(90deg,#f3f3f3,#e9e9e9)"></div><div class="cb" style="left:4px;top:243px"></div><div class="cell" style="left:23px;top:239px;width:40px;text-align:center">12</div><div class="cell" style="left:70px;top:239px;">Sophie</div><div class="cell" style="left:196px;top:239px;">Ehrentraut</div><div class="cell" style="left:322px;top:239px;">Musterberg</div><div class="cell" style="left:418px;top:239px;">12.12.1967</div><div class="cell" style="left:502px;top:239px;">Gerüstbau AG</div><div class="cell" style="left:621px;top:239px;">ja</div><div class="cell" style="left:681px;top:239px;">ja</div><svg class="a" style="left:747px;top:243px" width="15" height="16" viewBox="0 0 15 16"><rect x="5" y="0.8" width="4.5" height="2.4" rx="1" fill="#e6eaee" stroke="#4a4a4a" stroke-width="0.8"/><path d="M2.3 6 L3.2 14.6 H11.8 L12.7 6Z" fill="url(#trg)" stroke="#3f3f3f" stroke-width="0.9"/><path d="M5.6 7V13.5M7.5 7V13.5M9.4 7V13.5" stroke="#a0acb8" stroke-width="0.8"/><rect x="1" y="3" width="13" height="3" rx="1.3" fill="#f2f4f6" stroke="#4a4a4a" stroke-width="0.9"/><path d="M3.2 14.6 H11.8" stroke="#2e2e2e" stroke-width="1.4"/></svg><div class="a" style="left:0;top:261px;width:770px;height:22px;background:#fff;border-bottom:1px solid #ededed"></div><div class="a" style="left:0;top:261px;width:18px;height:21px;background:linear-gradient(90deg,#f3f3f3,#e9e9e9)"></div><div class="cb" style="left:4px;top:265px"></div><div class="cell" style="left:23px;top:261px;width:40px;text-align:center">13</div><div class="cell" style="left:70px;top:261px;">Hoffmeister</div><div class="cell" style="left:196px;top:261px;">Lisa</div><div class="cell" style="left:322px;top:261px;">Muster</div><div class="cell" style="left:418px;top:261px;">24.10.1972</div><div class="cell" style="left:502px;top:261px;">Gerüstbau AG</div><div class="cell" style="left:621px;top:261px;">ja</div><div class="cell" style="left:681px;top:261px;">ja</div><svg class="a" style="left:747px;top:265px" width="15" height="16" viewBox="0 0 15 16"><rect x="5" y="0.8" width="4.5" height="2.4" rx="1" fill="#e6eaee" stroke="#4a4a4a" stroke-width="0.8"/><path d="M2.3 6 L3.2 14.6 H11.8 L12.7 6Z" fill="url(#trg)" stroke="#3f3f3f" stroke-width="0.9"/><path d="M5.6 7V13.5M7.5 7V13.5M9.4 7V13.5" stroke="#a0acb8" stroke-width="0.8"/><rect x="1" y="3" width="13" height="3" rx="1.3" fill="#f2f4f6" stroke="#4a4a4a" stroke-width="0.9"/><path d="M3.2 14.6 H11.8" stroke="#2e2e2e" stroke-width="1.4"/></svg><div class="a" style="left:0;top:283px;width:770px;height:22px;background:#fff;border-bottom:1px solid #ededed"></div><div class="a" style="left:0;top:283px;width:18px;height:21px;background:linear-gradient(90deg,#f3f3f3,#e9e9e9)"></div><div class="cb" style="left:4px;top:287px"></div><div class="cell" style="left:23px;top:283px;width:40px;text-align:center">14</div><div class="cell" style="left:70px;top:283px;">Frosch</div><div class="cell" style="left:196px;top:283px;">Fred</div><div class="cell" style="left:322px;top:283px;">Musterbach</div><div class="cell" style="left:418px;top:283px;"></div><div class="cell" style="left:502px;top:283px;font-style:italic;">Selbstz.</div><div class="cell" style="left:621px;top:283px;">nein</div><div class="cell" style="left:681px;top:283px;">ja</div><svg class="a" style="left:747px;top:287px" width="15" height="16" viewBox="0 0 15 16"><rect x="5" y="0.8" width="4.5" height="2.4" rx="1" fill="#e6eaee" stroke="#4a4a4a" stroke-width="0.8"/><path d="M2.3 6 L3.2 14.6 H11.8 L12.7 6Z" fill="url(#trg)" stroke="#3f3f3f" stroke-width="0.9"/><path d="M5.6 7V13.5M7.5 7V13.5M9.4 7V13.5" stroke="#a0acb8" stroke-width="0.8"/><rect x="1" y="3" width="13" height="3" rx="1.3" fill="#f2f4f6" stroke="#4a4a4a" stroke-width="0.9"/><path d="M3.2 14.6 H11.8" stroke="#2e2e2e" stroke-width="1.4"/></svg></div><div class="a" style="left:793px;top:142px;width:20px;height:293px;background:#fff"></div><div class="a" style="left:797px;top:142px;width:15px;height:293px;background:#fbfbfb"></div><svg class="a" style="left:799px;top:149px" width="11" height="9"><path d="M1.5 7.5L5.5 1.5L9.5 7.5Z" fill="#8a8a8a" stroke="#8a8a8a" stroke-width="1.2" stroke-linejoin="round"/></svg><div class="a" style="left:800px;top:165px;width:9px;height:195px;background:#8a8a8a;border-radius:4.5px"></div><svg class="a" style="left:799px;top:418px" width="11" height="9"><path d="M1.5 1.5L5.5 7.5L9.5 1.5Z" fill="#8a8a8a" stroke="#8a8a8a" stroke-width="1.2" stroke-linejoin="round"/></svg><div class="a" style="left:812px;top:142px;width:1px;height:293px;background:#c9c9c9"></div><div class="a" style="left:21px;top:435px;width:792px;height:29px;background:#dfe8f6;border-top:1px solid #8db2e3;border-bottom:1px solid #c0c0c0;border-left:1px solid #c0c0c0"></div><svg class="a" style="left:29px;top:443px" width="12" height="12"><rect x="1" y="1" width="2" height="10" fill="#bcc3cc"/><path d="M10 1V11L4 6Z" fill="#bcc3cc"/></svg><svg class="a" style="left:49px;top:443px" width="10" height="12"><path d="M8 1V11L2 6Z" fill="#bcc3cc"/></svg><div class="a" style="left:67px;top:443px;width:1px;height:13px;background:#99bbe8"></div><div class="t" style="left:73px;top:443px;font-size:12.5px;line-height:14px">Seite</div><div class="a" style="left:103px;top:440px;width:34px;height:18px;background:#fff;border:1px solid #b5b8c8"></div><div class="t" style="left:126px;top:444px;font-size:11px;line-height:12px">1</div><div class="t" style="left:139px;top:443px;font-size:12.5px;line-height:14px">von 1</div><div class="a" style="left:175px;top:443px;width:1px;height:13px;background:#99bbe8"></div><svg class="a" style="left:186px;top:443px" width="10" height="12"><path d="M2 1V11L8 6Z" fill="#bcc3cc"/></svg><svg class="a" style="left:203px;top:443px" width="12" height="12"><path d="M2 1V11L8 6Z" fill="#bcc3cc"/><rect x="9" y="1" width="2" height="10" fill="#bcc3cc"/></svg><div class="a" style="left:221px;top:443px;width:1px;height:13px;background:#99bbe8"></div><svg class="a" style="left:228px;top:441px" width="15" height="15" viewBox="0 0 15 15"><path d="M2.5 6.5 A5 5 0 0 1 12 5" stroke="#3b8ede" stroke-width="2.2" fill="none"/><path d="M12.5 8.5 A5 5 0 0 1 3 10" stroke="#3b8ede" stroke-width="2.2" fill="none"/><path d="M9.5 2.5 L13.8 5.5 L9.5 7Z" fill="#3b8ede"/><path d="M5.5 12.5 L1.2 9.5 L5.5 8Z" fill="#3b8ede"/></svg><div class="a" style="left:253px;top:443px;width:1px;height:13px;background:#99bbe8"></div><div class="t" style="left:263px;top:443px;font-size:12.5px;line-height:14px">1 von 17 Zeilen gewählt</div><div class="btn2" style="left:19px;width:125px"><svg style="position:absolute;left:-1px;top:-1px" width="125" height="34" overflow="visible"><rect x="11" y="6" width="21" height="20.5" rx="1.5" fill="#4d6fa8" stroke="#2f4f80" stroke-width="0.8"/><rect x="14" y="6.5" width="15" height="11" fill="#fff"/><rect x="14" y="6.5" width="15" height="2" fill="#e03a2a"/><path d="M15 11H28M15 13.5H28" stroke="#c8c8d8" stroke-width="0.6"/><rect x="15.5" y="19.5" width="12" height="7" fill="#c8c8c8"/><rect x="17.5" y="20.5" width="3" height="5" fill="#4d6fa8"/></svg><div class="l" style="left:40px">Speichern</div></div><div class="btn2" style="left:149px;width:126px"><svg style="position:absolute;left:-1px;top:-1px" width="126" height="34" overflow="visible"><path d="M10.85 28.28 C10.39 19.85 14.45 18.16 17.40 18.16 C20.35 18.16 24.41 19.85 23.95 28.28 Q17.40 30.53 10.85 28.28Z" fill="url(#bodyb)" stroke="#151515" stroke-width="0.69"/><path d="M15.55 18.39 L16.94 20.78 L18.48 18.39Z" fill="#fff" stroke="#333" stroke-width="0.39"/><ellipse cx="17.40" cy="15.31" rx="5.08" ry="4.24" fill="#f3d3a2" stroke="#1a1a1a" stroke-width="0.62"/><path d="M11.70 16.00 C12.39 13.93 14.32 13.15 15.86 12.92 C18.17 12.62 21.25 12.38 23.02 14.70 C23.95 12.77 23.71 11.23 23.56 11.62 A6.16 6.16 0 0 0 11.24 12.00 C11.01 13.54 11.24 15.08 11.70 16.00Z" fill="url(#hair)"/><path d="M22.8 10.7H32.8M27.8 5.7V15.7" stroke="#86c33a" stroke-width="3.6"/></svg><div class="l" style="left:41px">neuer Teiln.</div></div><div class="btn2" style="left:280px;width:125px"><svg style="position:absolute;left:-1px;top:-1px" width="125" height="34" overflow="visible"><path d="M21.68 26.82 C21.25 18.94 25.05 17.36 27.80 17.36 C30.55 17.36 34.35 18.94 33.92 26.82 Q27.80 28.92 21.68 26.82Z" fill="url(#bodyb)" stroke="#151515" stroke-width="0.65"/><path d="M26.07 17.58 L27.37 19.81 L28.81 17.58Z" fill="#fff" stroke="#333" stroke-width="0.36"/><ellipse cx="27.80" cy="14.70" rx="4.75" ry="3.96" fill="#f3d3a2" stroke="#1a1a1a" stroke-width="0.58"/><path d="M22.47 15.34 C23.12 13.40 24.92 12.68 26.36 12.46 C28.52 12.18 31.40 11.96 33.06 14.12 C33.92 12.32 33.70 10.88 33.56 11.24 A5.76 5.76 0 0 0 22.04 11.60 C21.82 13.04 22.04 14.48 22.47 15.34Z" fill="url(#hair)"/><path d="M12.61 29.94 C12.17 21.84 16.07 20.22 18.90 20.22 C21.73 20.22 25.63 21.84 25.19 29.94 Q18.90 32.10 12.61 29.94Z" fill="url(#bodyb)" stroke="#151515" stroke-width="0.67"/><path d="M17.12 20.44 L18.46 22.74 L19.94 20.44Z" fill="#fff" stroke="#333" stroke-width="0.37"/><ellipse cx="18.90" cy="17.48" rx="4.88" ry="4.07" fill="#f3d3a2" stroke="#1a1a1a" stroke-width="0.59"/><path d="M13.42 18.15 C14.09 16.15 15.94 15.41 17.42 15.19 C19.64 14.89 22.60 14.67 24.30 16.89 C25.19 15.04 24.97 13.56 24.82 13.93 A5.92 5.92 0 0 0 12.98 14.30 C12.76 15.78 12.98 17.26 13.42 18.15Z" fill="url(#hair)"/></svg><div class="l" style="left:40px">neue Reserv.</div></div><div class="btn2" style="left:411px;width:125px"><svg style="position:absolute;left:-1px;top:-1px" width="125" height="34" overflow="visible"><path d="M15 8.5 L32 8.5 L30.5 26.5 L16.5 26.5Z" fill="url(#can)" stroke="#555" stroke-width="0.6"/><ellipse cx="23.5" cy="8.5" rx="8.5" ry="2.5" fill="#5a5a5a" stroke="#8a8a8a" stroke-width="0.8"/><path d="M20 12V25M24 12V25M28 12V25" stroke="#6a6a6a" stroke-width="0.9"/><ellipse cx="15.5" cy="21" rx="5" ry="7" fill="#8e8e8e" stroke="#5c5c5c" stroke-width="0.8" transform="rotate(15 15.5 21)"/><ellipse cx="15" cy="20.5" rx="3" ry="5" fill="#a8a8a8" transform="rotate(15 15 20.5)"/></svg><div class="l" style="left:40px">Löschen</div></div><div class="btn2" style="left:541px;width:126px"><svg style="position:absolute;left:-1px;top:-1px" width="126" height="34" overflow="visible"><circle cx="21.5" cy="17.3" r="9.8" fill="none" stroke="#d8432a" stroke-width="3.6"/><path d="M27.8 11 L15.2 23.6" stroke="#d8432a" stroke-width="3.4"/><circle cx="21.5" cy="17.3" r="11.6" fill="none" stroke="#b82010" stroke-width="0.8"/></svg><div class="l" style="left:40px">verwerfen</div></div><div class="t" style="left:681px;top:466px;font-size:8.9px;line-height:10.8px">Letzte Änderung:<br>&nbsp; Glowatzki, Axel<br>&nbsp; 06.08.2024 11:45 Uhr</div><div class="a" style="left:21px;top:504px;width:792px;height:231px;border:1px solid #99bbe8;border-bottom:none;background:#fff"></div><div class="a" style="left:22px;top:505px;width:790px;height:22px;background:#dfe8f6;border-bottom:1px solid #99bbe8"></div><div class="lab" style="left:35px;top:539px">Status:</div><div class="lab" style="left:35px;top:562px">Anrede/Titel:</div><div class="lab" style="left:35px;top:585px">Name:</div><div class="lab" style="left:35px;top:608px">Vorname:</div><div class="lab" style="left:35px;top:631px">Geburtsdatum:</div><div class="lab" style="left:35px;top:655px">Straße:</div><div class="lab" style="left:35px;top:678px">AdrZusatz:</div><div class="lab" style="left:35px;top:701px">PLZ/Ort:</div><div class="lab" style="left:35px;top:724px">Mail:</div><div class="inp" style="left:128px;top:534px;width:135px;height:20px;color:#777;">angemeldet<div class="trig"><svg style="position:absolute;left:3px;top:6px" width="9" height="6"><path d="M1 1L4.5 4.5L8 1" stroke="#2e4f8f" stroke-width="2" fill="none"/></svg></div></div><div class="inp" style="left:128px;top:557px;width:65px;height:20px;color:#777;">Frau<div class="trig"><svg style="position:absolute;left:3px;top:6px" width="9" height="6"><path d="M1 1L4.5 4.5L8 1" stroke="#2e4f8f" stroke-width="2" fill="none"/></svg></div></div><div class="inp" style="left:197px;top:557px;width:65px;height:20px;"><div class="trig"><svg style="position:absolute;left:3px;top:6px" width="9" height="6"><path d="M1 1L4.5 4.5L8 1" stroke="#2e4f8f" stroke-width="2" fill="none"/></svg></div></div><div class="inp" style="left:128px;top:580px;width:135px;height:20px;">Schäfer</div><div class="inp" style="left:128px;top:603px;width:135px;height:20px;">Silke</div><div class="inp" style="left:128px;top:626px;width:135px;height:20px;">05.10.1966<div class="trig"><svg style="position:absolute;left:2px;top:3px" width="11" height="12"><rect x="0.5" y="0.5" width="10" height="11" fill="#e8ecf2" stroke="#9aa7b8"/><path d="M0.5 4H10.5M4 4V11.5M7 4V11.5M0.5 7.5H10.5" stroke="#b8c2d0" stroke-width="0.8"/><circle cx="8" cy="2.5" r="1.4" fill="none" stroke="#c03030" stroke-width="0.8"/></svg></div></div><div class="inp" style="left:128px;top:650px;width:135px;height:20px;">Musterweg 12</div><div class="inp" style="left:128px;top:673px;width:135px;height:20px;"></div><div class="inp" style="left:128px;top:696px;width:54px;height:20px;">99999</div><div class="inp" style="left:186px;top:696px;width:77px;height:20px;">Musterbach</div><div class="inp" style="left:128px;top:719px;width:135px;height:20px;"></div><div class="lab" style="left:278px;top:539px">Teiln.-Gebühr:</div><div class="lab" style="left:278px;top:562px">Firma:</div><div class="lab" style="left:278px;top:585px">Abteilung:</div><div class="lab" style="left:278px;top:608px">Bemerkung:</div><div class="lab" style="left:278px;top:681px">Notiz (intern):</div><div class="lab" style="left:278px;top:731px">Sel. Anmeld.:</div><div class="inp" style="left:366px;top:534px;width:90px;height:20px;">42,5</div><div class="lab" style="left:461px;top:539px">EUR</div><svg class="a" style="left:491px;top:537px" width="14" height="14"><circle cx="7" cy="7" r="6.5" fill="#4a7bc4"/><circle cx="7" cy="7" r="5" fill="#5b8fd6"/><rect x="6" y="6" width="2" height="5" fill="#fff"/><rect x="6" y="3" width="2" height="2" fill="#fff"/></svg><div class="inp" style="left:366px;top:557px;width:125px;height:20px;">Gerüstbau AG<div class="trig"><svg style="position:absolute;left:3px;top:6px" width="9" height="6"><path d="M1 1L4.5 4.5L8 1" stroke="#2e4f8f" stroke-width="2" fill="none"/></svg></div></div><svg class="a" style="left:497px;top:559px" width="16" height="16" viewBox="0 0 16 16"><circle cx="6" cy="6" r="4.3" fill="#e8f0f8" stroke="#8a9aa8" stroke-width="1.6"/><path d="M9.2 9.2L14 14" stroke="#4f7f3f" stroke-width="2.6" stroke-linecap="round"/></svg><div class="inp" style="left:366px;top:581px;width:153px;height:20px;"></div><div class="a" style="left:366px;top:604px;width:153px;height:67px;border:1px solid #b5b8c8;background:#fff"></div><div class="a" style="left:366px;top:676px;width:153px;height:45px;border:1px solid #b5b8c8;background:#fff"></div><div class="inp" style="left:366px;top:726px;width:107px;height:20px;"></div><svg class="a" style="left:481px;top:728px" width="14" height="14"><circle cx="7" cy="7" r="6.5" fill="#4a7bc4"/><circle cx="7" cy="7" r="5" fill="#5b8fd6"/><rect x="6" y="6" width="2" height="5" fill="#fff"/><rect x="6" y="3" width="2" height="2" fill="#fff"/></svg><svg class="a" style="left:534px;top:547.5px" width="12" height="12"><circle cx="6" cy="6" r="5" fill="#fff" stroke="#7a7a7a" stroke-width="1"/></svg><div class="lab" style="left:550px;top:546.5px">Selbstzahler</div><svg class="a" style="left:534px;top:567.1px" width="12" height="12"><circle cx="6" cy="6" r="5" fill="#fff" stroke="#7a7a7a" stroke-width="1"/></svg><div class="lab" style="left:550px;top:566.1px">Praxen und Firmen</div><svg class="a" style="left:534px;top:586.7px" width="12" height="12"><circle cx="6" cy="6" r="5" fill="#fff" stroke="#7a7a7a" stroke-width="1"/><circle cx="6" cy="6" r="3" fill="#555"/></svg><div class="lab" style="left:550px;top:585.7px">BG Teilnehmer</div><svg class="a" style="left:534px;top:606.3px" width="12" height="12"><circle cx="6" cy="6" r="5" fill="#fff" stroke="#7a7a7a" stroke-width="1"/></svg><div class="lab" style="left:550px;top:605.3px">Mitarbeiter (intern)</div><div class="a" style="left:813px;top:71px;width:633px;height:664px;background:#fff;border-left:1px solid #b0b0b0;border-top:1px solid #b0b0b0"></div><div class="a" style="left:814px;top:72px;width:632px;height:22px;background:#dfe8f6;border-bottom:1px solid #99bbe8"></div><div class="t" style="left:817px;top:75px;font-size:14.6px;line-height:16px;font-weight:bold;color:#15428b">Brief</div><div class="a" style="left:819px;top:94px;width:627px;height:19px;background:linear-gradient(#f9f9f9,#e6e6e6);border-left:1px solid #c8d8ee"></div><div class="a" style="left:820px;top:94px;width:287px;height:19px;background:linear-gradient(#ebf3fd,#d9e8fb);border-right:1px solid #c8d8ee"></div><div class="a" style="left:1107px;top:94px;width:208px;height:19px;border-right:1px solid #d0d0d0"></div><div class="a" style="left:1315px;top:94px;width:128px;height:19px;border-right:1px solid #d0d0d0"></div><div class="t" style="left:825px;top:97px;font-size:12px;line-height:14px">Bereich</div><svg class="a" style="left:868px;top:102px" width="8" height="5"><path d="M0 4L4 0L8 4Z" fill="#7796c5"/></svg><div class="t" style="left:1113px;top:97px;font-size:12px;line-height:14px">Briefname</div><div class="t" style="left:1320px;top:97px;font-size:12px;line-height:14px">Verzeichnis</div><div class="a" style="left:819px;top:113px;width:627px;height:23px;background:#fff;border-bottom:1px solid #ededed;"></div><div class="t" style="left:835px;top:117px;font-size:12.5px;line-height:14px"><b>Mail</b> Absage Firma</div><div class="t" style="left:1113px;top:117px;font-size:12.5px;line-height:14px">Geschäftsbrief</div><div class="t" style="left:1320px;top:117px;font-size:12.5px;line-height:14px">KV-Vorlagen</div><div class="a" style="left:819px;top:136px;width:627px;height:23px;background:#fafafa;border-bottom:1px solid #ededed;"></div><div class="t" style="left:835px;top:140px;font-size:12.5px;line-height:14px"><b>Mail</b> Absage Person</div><div class="t" style="left:1113px;top:140px;font-size:12.5px;line-height:14px">KV Absage Person</div><div class="t" style="left:1320px;top:140px;font-size:12.5px;line-height:14px">Eigenes Layout</div><div class="a" style="left:819px;top:159px;width:627px;height:23px;background:#fff;border-bottom:1px solid #ededed;"></div><div class="t" style="left:835px;top:163px;font-size:12.5px;line-height:14px"><b>Mail</b> Bestätigung Anhang</div><div class="t" style="left:1113px;top:163px;font-size:12.5px;line-height:14px">Mail Absage Firma</div><div class="t" style="left:1320px;top:163px;font-size:12.5px;line-height:14px">Standardvorlagen</div><div class="a" style="left:819px;top:183px;width:627px;height:23px;background:#fafafa;border-bottom:1px solid #ededed;"></div><div class="t" style="left:835px;top:187px;font-size:12.5px;line-height:14px"><b>Mail</b> Bestätigung Firma</div><div class="t" style="left:1113px;top:187px;font-size:12.5px;line-height:14px">KV bestätigung firma</div><div class="t" style="left:1320px;top:187px;font-size:12.5px;line-height:14px">Eigenes Layout</div><div class="a" style="left:819px;top:206px;width:627px;height:23px;background:#dfe8f6;border-top:1px dotted #a3bae9;border-bottom:1px dotted #a3bae9;"></div><div class="t" style="left:835px;top:210px;font-size:12.5px;line-height:14px"><b>Mail</b> Bestätigung Firma (BG)</div><div class="t" style="left:1113px;top:210px;font-size:12.5px;line-height:14px">Mail Bestätigung Firma (BG)</div><div class="t" style="left:1320px;top:210px;font-size:12.5px;line-height:14px">Standardvorlagen</div><div class="a" style="left:819px;top:229px;width:627px;height:23px;background:#fafafa;border-bottom:1px solid #ededed;"></div><div class="t" style="left:835px;top:233px;font-size:12.5px;line-height:14px"><b>Mail</b> Bestätigung Person</div><div class="t" style="left:1113px;top:233px;font-size:12.5px;line-height:14px">KV bestätigung Person</div><div class="t" style="left:1320px;top:233px;font-size:12.5px;line-height:14px">Eigenes Layout</div><div class="a" style="left:819px;top:252px;width:627px;height:1px;background:#e4e4e4"></div><div class="a" style="left:818px;top:261px;width:640px;height:93px;border:1px solid #b5b8c8"></div><div class="t" style="left:824px;top:257px;padding:0 3px;background:#fff;font-size:10.4px;line-height:11px;font-weight:bold;color:#15428b">Zusatzinformation</div><div class="a" style="left:828px;top:277px;width:640px;height:60px;border:1px solid #b5b8c8;background:linear-gradient(#eeeeee,#fff 5px)"></div><div class="a" style="left:818px;top:355px;width:640px;height:400px;border:1px solid #b4b4b4;background:#fff"></div><div class="a" style="left:819px;top:356px;width:627px;height:21px;background:#dfe8f6;border-bottom:1px solid #99bbe8"></div><div class="a" style="left:819px;top:377px;width:627px;height:1px;background:#b9cfee"></div><div class="t" style="left:822px;top:358px;font-size:14.2px;line-height:16px;font-weight:bold;color:#15428b">Vorschau</div><div class="a" style="left:819px;top:378px;width:2px;height:357px;background:#a9c4ec"></div><div class="t" style="left:861px;top:416.92px;font-size:7.2px;line-height:7.2px;">Verfahrenshinweis: Durch organisatorische Maßnahmen ist zu gewährleisten, dass bei der Unterzeichnung nur die eigenen Personendaten eingesehen werden können. Nutzen</div><div class="t" style="left:861px;top:426.82px;font-size:7.2px;line-height:7.2px;">Sie bitte die elektronische Formularfunktion dieses Dokuments. Ansonsten füllen Sie es mit einem schwarzen oder dunkelblauen Stift aus.</div><div class="t" style="left:860px;top:443.24px;font-size:21.5px;line-height:21.5px;-webkit-text-stroke:0.35px #000">Abrechnungsformular</div><div class="t" style="left:861px;top:472.72px;font-size:13.1px;line-height:13.1px;-webkit-text-stroke:0.3px #000">für die Aus- und Fortbildung</div><div class="t" style="left:861px;top:486.62px;font-size:13.1px;line-height:13.1px;-webkit-text-stroke:0.3px #000">von betrieblichen Ersthelfenden</div><div class="a" style="left:1169px;top:448px;width:15px;height:13px;border:1px solid #e6e600"></div><div class="a" style="left:1253px;top:448px;width:15px;height:13px;border:1px solid #e6e600"></div><div class="a" style="left:1169px;top:466px;width:15px;height:13px;border:1px solid #e6e600"></div><div class="t" style="left:1171px;top:450.86px;font-size:11px;line-height:11px;">X</div><div class="t" style="left:1193px;top:452.23px;font-size:10.8px;line-height:10.8px;">Ausbildung</div><div class="t" style="left:1278px;top:452.23px;font-size:10.8px;line-height:10.8px;">Fortbildung</div><div class="t" style="left:1194px;top:470.23px;font-size:10.8px;line-height:10.8px;">Erste Hilfe in Bildungs- und</div><div class="t" style="left:1169px;top:485.63px;font-size:10.8px;line-height:10.8px;">Betreuungseinrichtungen</div><div class="a" style="left:855px;top:505px;width:283px;height:83px;border:1px solid #23902b"></div><div class="t" style="left:862px;top:512.91px;font-size:10.7px;line-height:10.7px;">Name des Mitgliedsbetriebes:</div><div class="t" style="left:862px;top:531.61px;font-size:10.7px;line-height:10.7px;">Gerüstbau AG</div><div class="t" style="left:862px;top:544.61px;font-size:10.7px;line-height:10.7px;">Musterweg1</div><div class="t" style="left:862px;top:558.51px;font-size:10.7px;line-height:10.7px;">99999 Musterhausen</div><div class="a" style="left:1163px;top:505px;width:272px;height:83px;border:1px solid #23902b"></div><div class="t" style="left:1169px;top:512.91px;font-size:10.7px;line-height:10.7px;">Zuständiger Unfallversicherungsträger:</div><div class="t" style="left:1169px;top:526.11px;font-size:10.7px;line-height:10.7px;">(Berufsgenossenschaft, Unfallkasse)</div><div class="t" style="left:1169px;top:539.31px;font-size:10.7px;line-height:10.7px;">BG BAU</div><div class="t" style="left:1169px;top:552.51px;font-size:10.7px;line-height:10.7px;">Unternehmensnummer (UNR.S, 15 Ziffern):</div><div class="t" style="left:1169px;top:565.71px;font-size:10.7px;line-height:10.7px;">97541235</div><div class="a" style="left:855px;top:597px;width:580px;height:140px;border:1px solid #23902b;border-bottom:none"></div><div class="a" style="left:855px;top:649px;width:468px;height:1px;background:#23902b"></div><div class="a" style="left:1322px;top:597px;width:1px;height:140px;background:#23902b"></div><div class="a" style="left:855px;top:671px;width:580px;height:1px;background:#23902b"></div><div class="a" style="left:855px;top:701px;width:580px;height:1px;background:#23902b"></div><div class="a" style="left:855px;top:732px;width:580px;height:1px;background:#23902b"></div><div class="a" style="left:903px;top:649px;width:1px;height:90px;background:#23902b"></div><div class="a" style="left:1078px;top:649px;width:1px;height:90px;background:#23902b"></div><div class="a" style="left:1199px;top:649px;width:1px;height:90px;background:#23902b"></div><div class="t" style="left:862px;top:604.37px;font-size:14px;line-height:14px;-webkit-text-stroke:0.4px #000">Teilnahmeliste</div><div class="t" style="left:969px;top:604.83px;font-size:9.6px;line-height:9.6px;">Die Teilnahmeliste ist vom Unternehmen auszufüllen.</div><div class="t" style="left:969px;top:618.33px;font-size:9.6px;line-height:9.6px;">Die Teilnahme ist von den Teilnehmenden am Tag des Kurses durch Unterschrift</div><div class="t" style="left:969px;top:631.83px;font-size:9.6px;line-height:9.6px;">zu bestätigen.</div><div class="t" style="left:1325px;top:614.20px;font-size:11.8px;line-height:11.8px;">Bestätigung</div><div class="t" style="left:1325px;top:629.23px;font-size:9.6px;line-height:9.6px;">durch die</div><div class="t" style="left:1325px;top:642.43px;font-size:9.6px;line-height:9.6px;">Ausbildungsstelle</div><div class="t" style="left:911px;top:654.71px;font-size:10.7px;line-height:10.7px;">Name, Vorname</div><div class="t" style="left:1086px;top:654.71px;font-size:10.7px;line-height:10.7px;">Geburtstag</div><div class="t" style="left:1207px;top:654.71px;font-size:10.7px;line-height:10.7px;">Unterschrift</div><div class="t" style="left:877px;top:683.81px;font-size:10.7px;line-height:10.7px;">1</div><div class="t" style="left:905px;top:677.61px;font-size:10.7px;line-height:10.7px;">Karlsson, Gerd</div><div class="t" style="left:877px;top:713.91px;font-size:10.7px;line-height:10.7px;">2</div><div class="t" style="left:905px;top:707.71px;font-size:10.7px;line-height:10.7px;">Schäfer, Silke</div><div class="t" style="left:1080px;top:707.71px;font-size:10.7px;line-height:10.7px;">05.10.1966</div><div class="a" style="left:1371px;top:676px;width:15px;height:14px;border:1px solid #e6e600"></div><div class="a" style="left:1371px;top:707px;width:15px;height:14px;border:1px solid #e6e600"></div><div class="a" style="left:0;top:735px;width:1446px;height:47px;background:#000"></div><svg class="a" style="left:0;top:0" width="1446" height="782"><ellipse cx="960.8" cy="584.75" rx="154.8" ry="194.25" fill="none" stroke="#e21b1b" stroke-width="5"/></svg></body></html>
